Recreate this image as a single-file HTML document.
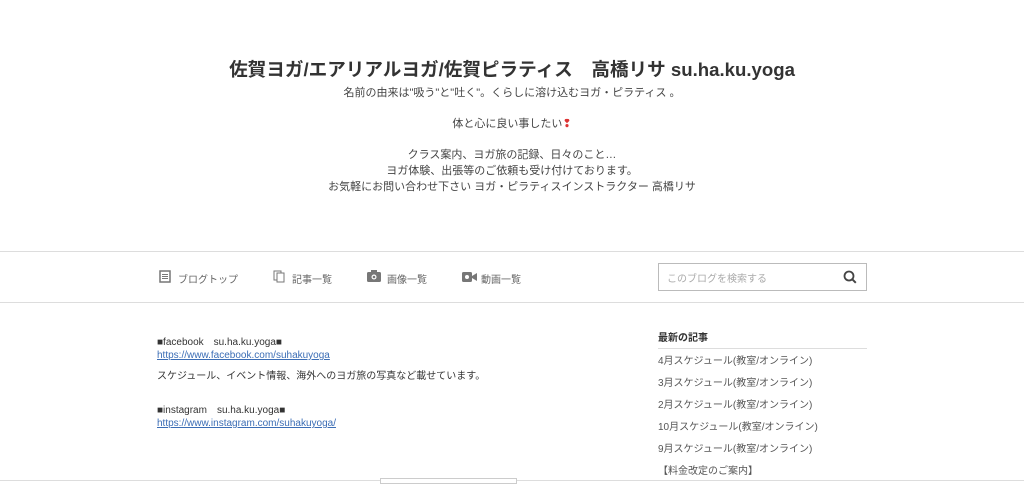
<!DOCTYPE html>
<html><head><meta charset="utf-8"><style>
*{margin:0;padding:0;box-sizing:border-box}
body{width:1024px;height:482px;overflow:hidden;background:#fff;font-family:"Liberation Sans","Noto Sans CJK JP",sans-serif;color:#333;position:relative}
.a{position:absolute;white-space:nowrap}
h1{position:absolute;top:55px;left:0;width:1024px;text-align:center;font-size:18.6px;font-weight:bold;color:#333}
.desc{position:absolute;top:86px;left:0;width:1024px;text-align:center;font-size:11px;line-height:15.6px;color:#444}
.line{position:absolute;left:0;width:1024px;height:1px;background:#ddd}
.nav{font-size:10px;color:#666;top:271px}
.side{font-size:10px;color:#555;left:658px}
.main{font-size:10px;color:#333;left:157px}
a{color:#3b6db5;text-decoration:underline}
</style></head><body>
<h1>佐賀ヨガ/エアリアルヨガ/佐賀ピラティス　高橋リサ su.ha.ku.yoga</h1>
<div class="desc">名前の由来は"吸う"と"吐く"。くらしに溶け込むヨガ・ピラティス 。<br><br>体と心に良い事したい<span style="color:#d33">❢</span><br><br>クラス案内、ヨガ旅の記録、日々のこと…<br>ヨガ体験、出張等のご依頼も受け付けております。<br>お気軽にお問い合わせ下さい ヨガ・ピラティスインストラクター 高橋リサ</div>
<div class="line" style="top:251px"></div>
<div class="line" style="top:302px"></div>
<svg class="a" style="left:159px;top:270px" width="12" height="13"><rect x="1" y="1" width="10" height="11" fill="none" stroke="#777" stroke-width="1.5"/><path d="M3 4.5h6M3 6.5h6M3 8.5h6" stroke="#777"/></svg>
<div class="a nav" style="left:178px">ブログトップ</div>
<svg class="a" style="left:273px;top:270px" width="12" height="13"><rect x="1" y="1" width="7" height="9" fill="none" stroke="#777"/><rect x="4" y="3" width="7" height="9" fill="#fff" stroke="#777"/></svg>
<div class="a nav" style="left:292px">記事一覧</div>
<svg class="a" style="left:367px;top:270px" width="14" height="12"><rect x="0" y="2" width="14" height="10" rx="1.5" fill="#777"/><rect x="4" y="0" width="6" height="3" fill="#777"/><circle cx="7" cy="7" r="2.5" fill="#fff"/><circle cx="7" cy="7" r="1.3" fill="#777"/></svg>
<div class="a nav" style="left:387px">画像一覧</div>
<svg class="a" style="left:462px;top:272px" width="15" height="10"><rect x="0" y="0" width="10" height="10" rx="1.5" fill="#777"/><path d="M10 4l5-3v8l-5-3z" fill="#777"/><circle cx="5" cy="5" r="2" fill="#fff"/></svg>
<div class="a nav" style="left:481px">動画一覧</div>
<div class="a" style="left:658px;top:263px;width:209px;height:28px;border:1px solid #bbb"></div>
<div class="a" style="left:667px;top:270px;font-size:10px;color:#aaa">このブログを検索する</div>
<svg class="a" style="left:843px;top:270px" width="14" height="14"><circle cx="6" cy="6" r="4.5" fill="none" stroke="#444" stroke-width="1.8"/><path d="M9.3 9.3l3.5 3.5" stroke="#444" stroke-width="2"/></svg>
<div class="a side" style="top:329px;font-weight:bold;color:#333">最新の記事</div>
<div class="a" style="left:658px;top:348px;width:209px;height:1px;background:#ddd"></div>
<div class="a side" style="top:352px">4月スケジュール(教室/オンライン)</div>
<div class="a side" style="top:374px">3月スケジュール(教室/オンライン)</div>
<div class="a side" style="top:396px">2月スケジュール(教室/オンライン)</div>
<div class="a side" style="top:418px">10月スケジュール(教室/オンライン)</div>
<div class="a side" style="top:440px">9月スケジュール(教室/オンライン)</div>
<div class="a side" style="top:462px">【料金改定のご案内】</div>
<div class="a" style="left:658px;top:480px;width:209px;height:1px;background:#ddd"></div>
<div class="a main" style="top:333px">■facebook　su.ha.ku.yoga■</div>
<div class="a main" style="top:350px"><a>https://www.facebook.com/suhakuyoga</a></div>
<div class="a main" style="top:367px">スケジュール、イベント情報、海外へのヨガ旅の写真など載せています。</div>
<div class="a main" style="top:401px">■instagram　su.ha.ku.yoga■</div>
<div class="a main" style="top:418px"><a>https://www.instagram.com/suhakuyoga/</a></div>
<div class="a" style="left:0;top:480px;width:1024px;height:1px;background:#ddd"></div>
<div class="a" style="left:380px;top:478px;width:137px;height:6px;border:1px solid #ccc;background:#fff"></div>
</body></html>
